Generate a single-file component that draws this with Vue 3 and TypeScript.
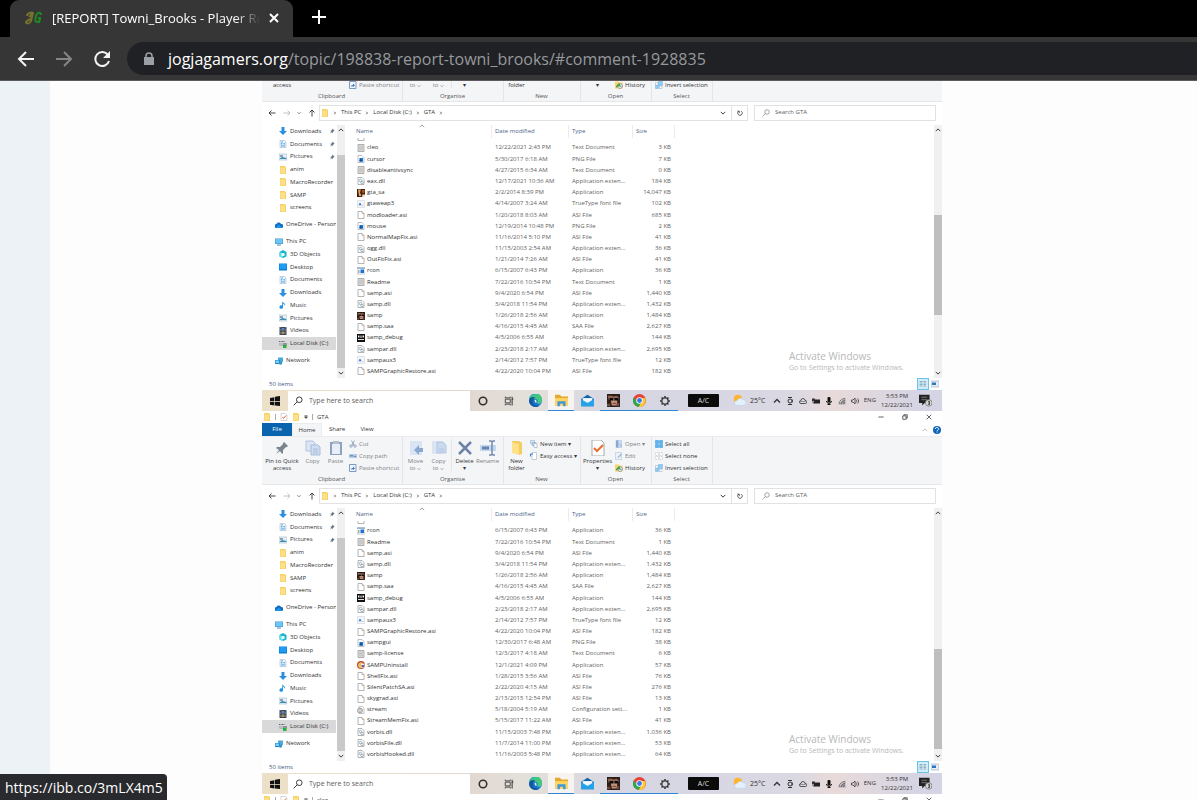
<script setup lang="ts">
interface FileRow {
  name: string
  icon: string
  date: string
  type: string
  size: string
}
interface NavItem {
  label: string
  icon: string
  root?: boolean
  pinned?: boolean
  selected?: boolean
  gapBefore?: boolean
}
interface Shot {
  id: string
  title?: string
  files: FileRow[]
  thumbTop: number
}

const file = (name: string, icon: string, date: string, type: string, size: string): FileRow => ({
  name, icon, date, type, size: size + ' KB',
})

const EXT = 'Application exten...'
const files: FileRow[] = [
  file('cleo.asi', 'blank', '10/22/2020 4:10 PM', 'ASI File', '327'),
  file('cleo', 'text', '12/22/2021 2:43 PM', 'Text Document', '3'),
  file('cursor', 'png', '5/30/2017 6:18 AM', 'PNG File', '7'),
  file('disableantivsync', 'text', '4/27/2015 6:34 AM', 'Text Document', '0'),
  file('eax.dll', 'dll', '12/17/2021 10:36 AM', EXT, '184'),
  file('gta_sa', 'gta', '2/2/2014 8:39 PM', 'Application', '14,047'),
  file('gtaweap3', 'font', '4/14/2007 3:24 AM', 'TrueType font file', '102'),
  file('modloader.asi', 'blank', '1/20/2018 8:03 AM', 'ASI File', '685'),
  file('mouse', 'png', '12/19/2014 10:48 PM', 'PNG File', '2'),
  file('NormalMapFix.asi', 'blank', '11/16/2014 5:10 PM', 'ASI File', '41'),
  file('ogg.dll', 'dll', '11/15/2003 2:54 AM', EXT, '36'),
  file('OutFitFix.asi', 'blank', '1/21/2014 7:26 AM', 'ASI File', '41'),
  file('rcon', 'app', '6/15/2007 6:43 PM', 'Application', '36'),
  file('Readme', 'text', '7/22/2016 10:54 PM', 'Text Document', '1'),
  file('samp.asi', 'blank', '9/4/2020 6:54 PM', 'ASI File', '1,440'),
  file('samp.dll', 'dll', '3/4/2018 11:54 PM', EXT, '1,432'),
  file('samp', 'samp', '1/26/2018 2:56 AM', 'Application', '1,484'),
  file('samp.saa', 'blank', '4/16/2015 4:45 AM', 'SAA File', '2,627'),
  file('samp_debug', 'debug', '4/5/2006 6:55 AM', 'Application', '144'),
  file('sampar.dll', 'dll', '2/23/2018 2:17 AM', EXT, '2,695'),
  file('sampaux3', 'font', '2/14/2012 7:57 PM', 'TrueType font file', '12'),
  file('SAMPGraphicRestore.asi', 'blank', '4/22/2020 10:04 PM', 'ASI File', '182'),
  file('sampgui', 'png', '12/30/2017 6:48 AM', 'PNG File', '38'),
  file('samp-license', 'text', '12/3/2017 4:18 AM', 'Text Document', '6'),
  file('SAMPUninstall', 'uninstall', '12/1/2021 4:09 PM', 'Application', '57'),
  file('ShellFix.asi', 'blank', '1/28/2015 3:56 AM', 'ASI File', '76'),
  file('SilentPatchSA.asi', 'blank', '2/22/2020 4:15 AM', 'ASI File', '276'),
  file('skygrad.asi', 'blank', '2/13/2015 12:54 PM', 'ASI File', '13'),
  file('stream', 'config', '5/18/2004 5:19 AM', 'Configuration sett...', '1'),
  file('StreamMemFix.asi', 'blank', '5/15/2017 11:22 AM', 'ASI File', '41'),
  file('vorbis.dll', 'dll', '11/15/2003 7:48 PM', EXT, '1,036'),
  file('vorbisFile.dll', 'dll', '11/7/2014 11:00 PM', EXT, '53'),
  file('vorbisHooked.dll', 'dll', '11/16/2003 5:48 PM', EXT, '64'),
]

/* The first window is scrolled past its title bar, the last shows only that. */
const shots: Shot[] = [
  { id: 'a', files: files.slice(0, 22), thumbTop: 93 },
  { id: 'b', title: 'GTA', files: files.slice(11, 33), thumbTop: 144 },
  { id: 'c', title: 'cleo', files: [], thumbTop: 0 },
]

const nav: NavItem[] = [
  { label: 'Downloads', icon: 'download', pinned: true },
  { label: 'Documents', icon: 'document', pinned: true },
  { label: 'Pictures', icon: 'picture', pinned: true },
  { label: 'anim', icon: 'folder' },
  { label: 'MacroRecorder', icon: 'folder' },
  { label: 'SAMP', icon: 'folder' },
  { label: 'screens', icon: 'folder' },
  { label: 'OneDrive - Personal', icon: 'onedrive', root: true, gapBefore: true },
  { label: 'This PC', icon: 'pc', root: true, gapBefore: true },
  { label: '3D Objects', icon: 'cube' },
  { label: 'Desktop', icon: 'desktop' },
  { label: 'Documents', icon: 'document' },
  { label: 'Downloads', icon: 'download' },
  { label: 'Music', icon: 'music' },
  { label: 'Pictures', icon: 'picture' },
  { label: 'Videos', icon: 'video' },
  { label: 'Local Disk (C:)', icon: 'disk', selected: true },
  { label: 'Network', icon: 'network', root: true, gapBefore: true },
]

const apps = [
  { name: 'Cortana', icon: 'ring' },
  { name: 'Task view', icon: 'taskview' },
  { name: 'Edge', icon: 'edge' },
  { name: 'File Explorer', icon: 'explorer', state: 'active' },
  { name: 'Mail', icon: 'mail' },
  { name: 'SAMP', icon: 'samp', state: 'open' },
  { name: 'Chrome', icon: 'chrome', state: 'open' },
  { name: 'Settings', icon: 'gear', state: 'open' },
]
const tray = ['up', 'camera', 'cloud', 'power', 'mic', 'wifi', 'sound']

/* Every glyph is drawn on a 16 x 16 canvas. */
const icons: Record<string, string> = {
  folder: '<path d="M2 0h9l3 2v14H2z" fill="#f7d062"/><path d="M3 3h9v12H3z" fill="#ffe08a"/>',
  bigfolder: '<path d="M3 1h7l3 2v11l-3 1V5L3 3z" fill="#f5cc62"/><path d="M3 2l7 2v11l-7-2z" fill="#ffe18a"/>',
  blank: '<path d="M2 1h8l4 4v10H2z" fill="#fff" stroke="#8d8d8d" stroke-width="1.300"/><path d="M10 1v4h4" fill="none" stroke="#8d8d8d"/>',
  text: '<path d="M2 1h12v14H2z" fill="#e2e2e2" stroke="#8d8d8d" stroke-width="1.300"/><path d="M4 4h8M4 6h8M4 8h8M4 10h8M4 12h8" stroke="#aaa"/>',
  dll: '<path d="M2 1h8l4 4v10H2z" fill="#fff" stroke="#8d8d8d" stroke-width="1.300"/><circle cx="7" cy="7" r="2.500" fill="none" stroke="#7d9db0" stroke-width="1.500"/><circle cx="10" cy="11" r="2.500" fill="none" stroke="#7d9db0" stroke-width="1.500"/>',
  config: '<path d="M4 1h7l3 3v11H4z" fill="#fff" stroke="#8d8d8d"/><circle cx="6" cy="9" r="5" fill="#ddd" stroke="#888" stroke-width="1.500"/><circle cx="6" cy="9" r="2" fill="#fff" stroke="#888"/>',
  png: '<path d="M2 1h8l4 4v10H2z" fill="#fff" stroke="#94a0ae" stroke-width="1.300"/><path d="M5 6h7v7H5z" fill="#1a74d1"/><path d="M5 10l2-2 5 5H5z" fill="#0c4d94"/>',
  font: '<path d="M1 1h14v14H1z" fill="#f3f6fa" stroke="#c5cdd6"/><path d="M4 11l2-5 2 5M5 9h3" stroke="#2866c9" stroke-width="1.500" fill="none"/><path d="M11 11h2" stroke="#888"/>',
  app: '<path d="M0 1h16v13H0z" fill="#fff" stroke="#8797a8"/><path d="M0 1h16v3H0z" fill="#9db4cc"/><path d="M2 6h3v6H2z" fill="#aaa"/><path d="M7 5h7v7H7z" fill="#1673d6"/>',
  gta: '<path d="M0 0h16v16H0z" fill="#3b1f14"/><path d="M2 1h6l-2 6 3 7H4z" fill="#e6a25a"/><path d="M10 2h5v5l-4 2z" fill="#bb5b27"/><path d="M11 11h5v5h-6z" fill="#f1e3cc"/>',
  samp: '<path d="M0 0h16v16H0z" fill="#2d1d17"/><path d="M1 2h5l2 1 4-1 3 3-1 2H2z" fill="#8d6552"/><path d="M4 5h9l-1 9H6z" fill="#c48f78"/><path d="M3 5h5v3H3zM9 5h5v3H9z" fill="#0d0b0b"/><path d="M7 11h4v1H7z" fill="#5a3328"/><path d="M0 12h4v3H0zM12 11h3v4h-3z" fill="#6b4d40"/>',
  debug: '<path d="M0 0h16v16H0z" fill="#111"/><path d="M2 3h3v4H2zM7 3h2v5H7zM11 3h3v4h-3z" fill="#eee"/><path d="M2 11h12" stroke="#ddd" stroke-width="2"/>',
  uninstall: '<circle cx="8" cy="8" r="8" fill="#b6452f"/><path d="M2 8a6 6 0 0 1 10-4L8 8l4 5A6 6 0 0 1 2 8z" fill="#f0bd54"/><path d="M8 5h7v8H8z" fill="#e9e9f6"/><path d="M9 8h5v4H9z" fill="#5468ac"/>',
  download: '<path d="M5 0h6v8h5l-8 8-8-8h5z" fill="#2e8fe0"/>',
  document: '<path d="M2 1h9l3 3v11H2z" fill="#eef5fb" stroke="#8aa7bd"/><path d="M4 4h4M4 7h3M9 7h3M4 10h3M9 10h3M4 12h8" stroke="#3f9ad8" stroke-width="1.500"/>',
  picture: '<path d="M0 2h16v12H0z" fill="#e5f2fc" stroke="#93a5b3"/><path d="M2 5h6v2H2z" fill="#39506a"/><path d="M2 10l5-2 8 2v2H2z" fill="#3c91b5"/>',
  onedrive: '<path d="M4 14a4 4 0 0 1-1-8 5 5 0 0 1 9 0 4 4 0 0 1 1 8z" fill="#0f6cc4"/><path d="M2 11l6-4 6 6-2 1H4z" fill="#1c95e6"/>',
  pc: '<path d="M0 1h16v11H0z" fill="#4b94c4"/><path d="M1 2h14v9H1z" fill="#69c6f7"/><path d="M4 14h8" stroke="#4f87b0" stroke-width="2"/>',
  cube: '<path d="M1 4l7-4 7 4v9l-7 3-7-3z" fill="#18b4cb"/><path d="M1 4l7 3v9l-7-3z" fill="#5de0ea"/><path d="M5 6h6v6H5z" fill="#e8fbff"/>',
  desktop: '<path d="M0 1h16v14H0z" fill="#0f7fd6"/><path d="M1 2h14v10H1z" fill="#1c9df2"/>',
  music: '<path d="M7 0c0 4 7 4 5 10 0-3-3-4-4-5v7a3.500 3.500 0 1 1-2-3z" fill="#1d93e6"/>',
  video: '<path d="M1 0h14v16H1z" fill="#3d4550"/><path d="M5 2h6v5H5z" fill="#5c89c4"/><path d="M5 9h6v5H5z" fill="#a88f63"/><path d="M3 1v15M13 1v15" stroke="#e6e6e6" stroke-dasharray="1 2"/>',
  disk: '<path d="M0 3h11" stroke="#567" stroke-width="2" stroke-dasharray="2 1"/><path d="M1 6h15v5H1z" fill="#8f9499"/><path d="M2 8h6" stroke="#e4e7ea" stroke-width="2"/><path d="M8 10h7v6H8z" fill="#25b33b"/>',
  network: '<path d="M6 1h10v9H6z" fill="#4aa9dd"/><path d="M0 6h10v8H0z" fill="#2586c2"/><path d="M1 7h7v5H1z" fill="#7bd0f5"/><circle cx="11" cy="12" r="3.500" fill="#3595cf"/>',
  pin: '<path d="M9 1l6 6-2 1-3 3v3l-3-3-5 4 4-5-3-3h3l3-3z" fill="#5f7488"/>',
  bigpin: '<path d="M10 2l4 4-1 1h-1l-3 3v3l-1 1-2-3-4 3 3-4-3-2 1-1h3l3-3V3z" fill="#7b838c"/>',
  copy: '<path d="M1 1h7l2 2v8H1z" fill="#dbe5f3" stroke="#b4c6df"/><path d="M6 5h7l2 2v8H6z" fill="#cfdef1" stroke="#a5bbda"/><path d="M8 9h5M8 11h5M8 13h5" stroke="#a9bfdc"/>',
  paste: '<path d="M2 2h12v13H2z" fill="#8ea2c0"/><path d="M4 4h8v10H4z" fill="#e8eef7"/><path d="M5 1h6v3H5z" fill="#b5c0d1"/>',
  cut: '<path d="M5 1l5 10M11 1L6 11" stroke="#8494ac" fill="none" stroke-width="1.500"/><circle cx="4" cy="12" r="2.500" fill="none" stroke="#7b93ba" stroke-width="1.500"/><circle cx="12" cy="12" r="2.500" fill="none" stroke="#7b93ba" stroke-width="1.500"/>',
  copypath: '<path d="M0 4h16v8H0z" fill="#b5cae6"/><path d="M2 9l2-3 2 3 2-3M10 9h4" stroke="#4e75ab" stroke-width="1.500" fill="none"/>',
  shortcut: '<path d="M1 1h13v14H1z" fill="#f0f5fc" stroke="#7d9ac2" stroke-width="2"/><path d="M5 12V8h3V5l4 4-4 3v-2" fill="#4679be"/>',
  moveto: '<path d="M2 1h12v14H2z" fill="#d9e5f4"/><path d="M15 8v4h-4v3l-5-5 5-5v3z" fill="#8ca8cf"/>',
  copyto: '<path d="M1 1h9v13H1z" fill="#dce6f3"/><path d="M6 2h6l3 3v8H6z" fill="#c9daef" stroke="#b2c6e1"/><path d="M8 9h5M8 11h5" stroke="#b2c6e1"/>',
  delete: '<path d="M2 2l12 12M14 2L2 14" stroke="#6d82a7" stroke-width="2.500"/>',
  rename: '<path d="M0 5h16v6H0z" fill="#c6d6ec"/><path d="M2 8h7" stroke="#6584b3" stroke-width="3"/><path d="M9 1h2l1 1 1-1h2M12 2v12M9 15h2l1-1 1 1h2" stroke="#7288ac" fill="none" stroke-width="1.500"/>',
  newitem: '<path d="M1 1h8v6H1z" fill="#dceaf7" stroke="#87a4c2"/><path d="M4 5h7v6H4z" fill="#b9d6f2" stroke="#7e9cba"/><path d="M8 7h6v8H8z" fill="#fff" stroke="#8595a8"/>',
  easy: '<path d="M4 1h9v14H4z" fill="#fff" stroke="#9aa4b0"/><path d="M1 9V4h5" fill="none" stroke="#2f7ed0" stroke-width="2"/>',
  properties: '<path d="M2 0h9l3 3v13H2z" fill="#fff" stroke="#a9a9a9"/><path d="M4 8l3 3 6-6" fill="none" stroke="#ef6b29" stroke-width="2"/>',
  open: '<path d="M2 1h11v14H2z" fill="#d8e5f5" stroke="#9fb9d9"/><path d="M2 1h5v14H2z" fill="#86a8d1"/><path d="M10 5v7h4" stroke="#6e91bd" fill="none"/>',
  edit: '<path d="M1 1h12v14H1z" fill="#ecf2f9" stroke="#a5bad4"/><path d="M5 12l1-3 6-6 2 2-6 6z" fill="#9db9da"/>',
  history: '<path d="M0 1h7l2 2h6v12H0z" fill="#f7d66d"/><circle cx="10" cy="10" r="5" fill="#e8f2e5" stroke="#888" stroke-width="1.500"/><path d="M2 14c0-5 2-7 5-7V4l4 4-4 4v-2c-2 0-3 2-5 4z" fill="#30a23b"/><path d="M10 8v3h3" stroke="#555" fill="none"/>',
  selectall: '<path d="M1 1h6v6H1zM9 1h6v6H9zM1 9h6v6H1zM9 9h6v6H9z" fill="#58b7f2" stroke="#2c92d6"/>',
  selectnone: '<path d="M1 1h6v6H1zM9 1h6v6H9zM1 9h6v6H1zM9 9h6v6H9z" fill="#fff" stroke="#a9b1ba" stroke-dasharray="2 1"/>',
  invert: '<path d="M7 1h8v8H7zM1 9h6v6H1z" fill="#8fccf5" stroke="#64aee0"/><path d="M1 3h5v5H1zM9 10h5v5H9z" fill="#fff" stroke="#89a8c2"/>',
  back: '<path d="M15 8H2M7 3L2 8l5 5" fill="none" stroke="currentColor" stroke-width="1.800"/>',
  fwd: '<path d="M1 8h13M9 3l5 5-5 5" fill="none" stroke="currentColor" stroke-width="1.800"/>',
  upward: '<path d="M8 15V2M3 7l5-5 5 5" fill="none" stroke="currentColor" stroke-width="1.800"/>',
  right: '<path d="M5 3l5 5-5 5" fill="none" stroke="currentColor" stroke-width="3"/>',
  down: '<path d="M2 5l6 6 6-6" fill="none" stroke="currentColor" stroke-width="2.500"/>',
  up: '<path d="M2 11l6-6 6 6" fill="none" stroke="currentColor" stroke-width="2.500"/>',
  caret: '<path d="M2 2h12M2 7h12l-6 7z" fill="currentColor" stroke="currentColor" stroke-width="2"/>',
  refresh: '<path d="M5 3a6 6 0 1 0 6 0M6 8V3H1" fill="none" stroke="currentColor" stroke-width="2"/>',
  search: '<circle cx="10" cy="6" r="4.500" fill="none" stroke="currentColor" stroke-width="1.500"/><path d="M7 9l-6 6" stroke="currentColor" stroke-width="1.500"/>',
  minimise: '<path d="M1 8h14" stroke="currentColor" stroke-width="2"/>',
  restore: '<path d="M2 5h9v9H2zM5 5V2h9v9h-3" fill="none" stroke="currentColor" stroke-width="2"/>',
  close: '<path d="M2 2l12 12M14 2L2 14" fill="none" stroke="currentColor" stroke-width="2"/>',
  help: '<circle cx="8" cy="8" r="8" fill="#0f66bd"/><path d="M5 6a3 3 0 1 1 4 2.500L8 10M8 11v2" fill="none" stroke="#fff" stroke-width="1.800"/>',
  checkdoc: '<path d="M2 1h9l3 3v11H2z" fill="#fff" stroke="#aaa"/><path d="M5 8l2 3 5-6" fill="none" stroke="#e4672d" stroke-width="2"/>',
  windows: '<path d="M0 3l7-1v6H0zM8 1l8-1v8H8zM0 9h7v6l-7-1zM8 9h8v7l-8-1z" fill="#111"/>',
  ring: '<circle cx="8" cy="8" r="6" fill="none" stroke="#303030" stroke-width="2.500"/>',
  taskview: '<path d="M2 5h8v6H2zM2 1v2h8V1M2 15v-2h8v2" fill="none" stroke="#444" stroke-width="1.500"/><path d="M13 1v14M12 5h3" stroke="#444" stroke-width="1.800"/>',
  edge: '<circle cx="8" cy="8" r="8" fill="#1478c9"/><path d="M0 6a8 8 0 0 1 16 2c0 3-3 4-6 3 2-3-1-6-4-5S1 8 0 6z" fill="#42c77f"/><path d="M0 8c1-5 6-5 8-3-3 0-4 3-3 6s5 4 8 3A8 8 0 0 1 0 8z" fill="#1557a3"/><path d="M0 6a8 8 0 0 1 9-6C5 1 2 3 0 6z" fill="#2aa9d8"/><path d="M8 7c2 1 1 3 1 4 2 1 5 0 6-1-2 3-8 2-8-2 0-1 0-1 1-1z" fill="#eaf7fb"/>',
  explorer: '<path d="M0 1h6l2 2h8v11H0z" fill="#e6a92f"/><path d="M0 5h16v9H0z" fill="#ffd460"/><path d="M3 9h10v6h-3v-3H6v3H3z" fill="#3d99d9"/>',
  mail: '<path d="M0 6l8-5 8 5v9H0z" fill="#0e63ad"/><path d="M2 5h12v6H2z" fill="#f2f8fd"/><path d="M0 6l8 5 8-5v9H0z" fill="#24a2ea"/>',
  chrome: '<circle cx="8" cy="8" r="8" fill="#e64335"/><path d="M1 4a8 8 0 0 0 6 12l4-7-6 1z" fill="#31a650"/><path d="M15 5a8 8 0 0 1-8 11l4-7-3-4z" fill="#fcc934"/><circle cx="8" cy="8" r="4" fill="#fff"/><circle cx="8" cy="8" r="3" fill="#3979e3"/>',
  gear: '<circle cx="8" cy="8" r="5" fill="none" stroke="#3a3a3a" stroke-width="2"/><path d="M8 0v3M8 13v3M0 8h3M13 8h3M2.500 2.500l2 2M11.500 11.500l2 2M13.500 2.500l-2 2M2.500 13.500l2-2" stroke="#3a3a3a" stroke-width="2.500"/>',
  weather: '<circle cx="6" cy="6" r="5" fill="#ffb52e"/><path d="M5 14a3 3 0 0 1 0-6 4 4 0 0 1 7-1 3.500 3.500 0 0 1 1 7z" fill="#e4f0fb" stroke="#a9c8e6" stroke-width=".5"/>',
  camera: '<path d="M4 1h8M4 15h8" stroke="#333" stroke-width="2"/><circle cx="8" cy="8" r="4" fill="none" stroke="#333" stroke-width="2"/><path d="M13 5v6" stroke="#333" stroke-width="1.500"/>',
  cloud: '<path d="M4 13a3 3 0 0 1 0-6 4 4 0 0 1 8 0 3 3 0 0 1 1 6z" fill="none" stroke="#444" stroke-width="1.800"/><path d="M3 9h10" stroke="#444"/>',
  power: '<path d="M4 5h12v8H4z" fill="#222"/><path d="M0 3h6v5H0z" fill="#333"/><path d="M2 8v4h3" fill="none" stroke="#333" stroke-width="1.500"/>',
  mic: '<rect x="5" y="0" width="6" height="11" rx="2" fill="#111"/><path d="M3 8c0 6 10 6 10 0M8 12v4M5 15h6" fill="none" stroke="#111" stroke-width="2"/>',
  wifi: '<path d="M1 15L15 1v14z" fill="#a9a5ab"/><path d="M2 14A12 12 0 0 1 14 3M6 14a8 8 0 0 1 8-7M10 14a4 4 0 0 1 4-3" fill="none" stroke="#444" stroke-width="1.300"/>',
  sound: '<path d="M1 6h3l4-4v12l-4-4H1z" fill="none" stroke="#333" stroke-width="1.500"/><path d="M10 5c2 2 2 4 0 6M13 3c3 3 3 7 0 10" fill="none" stroke="#333" stroke-width="1.500"/>',
  notify: '<path d="M0 1h13v10H7l-3 3v-3H0z" fill="#222"/><path d="M3 4h7M3 7h7" stroke="#888"/><circle cx="12" cy="11" r="4" fill="#ddd" stroke="#777"/><path d="M11 9h2v4h-2M11 11h2" stroke="#333" fill="none"/>',
  details: '<path d="M0 0h16v16H0z" fill="#d3eefb"/><path d="M1 3h6M1 6h6M1 9h6M1 12h6M9 3h5M9 6h5M9 9h5M9 12h5" stroke="#7c97a8" stroke-width="1.500"/>',
  thumbs: '<path d="M0 2h16v12H0z" fill="#e6eef6" stroke="#8a97a4"/><path d="M2 5h8v5H2z" fill="#2b77bd"/>',
}
</script>

<template>
  <div class="browser">
    <header class="chrome">
      <div class="tabstrip">
        <div class="tab">
          <svg class="favicon" viewBox="0 0 18 14" aria-hidden="true">
            <path d="M2 5c0-3 5-4 6-3L6 10c-1 3-5 3-5 1 0-1 2-2 5-3M4 6l4-4" fill="none" stroke="#75722c" stroke-width="2" />
            <path d="M16 4c0-3-4-3-5 1s-1 6 1 6 3-1 3-4h-2M15 7l-1 5" fill="none" stroke="#1d8a24" stroke-width="2" />
          </svg>
          <span class="tab-title">[REPORT] Towni_Brooks - Player Report</span>
          <button class="plain" aria-label="Close tab">
            <svg class="tab-close" viewBox="0 0 10 10"><path d="M1 1l8 8M9 1L1 9" stroke="#fff" stroke-width="2" /></svg>
          </button>
        </div>
        <button class="plain new-tab" aria-label="New tab">
          <svg viewBox="0 0 14 14"><path d="M7 0v14M0 7h14" stroke="#fff" stroke-width="2" /></svg>
        </button>
      </div>
      <div class="toolbar">
        <button class="plain" aria-label="Back">
          <svg class="nav-icon" viewBox="0 0 18 18"><path d="M17 9H3M9 2L2 9l7 7" fill="none" stroke="#f4f4f4" stroke-width="2" /></svg>
        </button>
        <button class="plain" aria-label="Forward">
          <svg class="nav-icon" viewBox="0 0 18 18"><path d="M1 9h14M9 2l7 7-7 7" fill="none" stroke="#858585" stroke-width="2" /></svg>
        </button>
        <button class="plain" aria-label="Reload">
          <svg class="nav-icon" viewBox="0 0 18 18">
            <path d="M15 5a7 7 0 1 0 1 6" fill="none" stroke="#f4f4f4" stroke-width="2" /><path d="M17 1v7h-7z" fill="#f4f4f4" />
          </svg>
        </button>
        <div class="omnibox">
          <svg class="lock" viewBox="0 0 10 14" aria-hidden="true">
            <path d="M0 5h10v8H0z" fill="#9aa0a6" /><path d="M2 6V4a3 3 0 0 1 6 0v2" fill="none" stroke="#9aa0a6" stroke-width="1.5" />
          </svg>
          <a class="url" href="#comment-1928835"><b>jogjagamers.org</b>/topic/198838-report-towni_brooks/#comment-1928835</a>
        </div>
      </div>
    </header>

    <main class="page">
      <article class="post">
        <section v-for="shot in shots" :key="shot.id" class="shot">
          <div v-if="shot.title" class="titlebar">
            <svg class="ic" viewBox="0 0 16 16" v-html="icons.folder" />
            <i class="bar" />
            <svg class="ic" viewBox="0 0 16 16" v-html="icons.checkdoc" />
            <svg class="ic" viewBox="0 0 16 16" v-html="icons.folder" />
            <svg class="ic tiny" viewBox="0 0 16 16" v-html="icons.caret" />
            <i class="bar" />
            <span class="title">{{ shot.title }}</span>
            <div class="window-buttons">
              <button class="plain" aria-label="Minimise"><svg class="ic small" viewBox="0 0 16 16" v-html="icons.minimise" /></button>
              <button class="plain" aria-label="Restore"><svg class="ic small" viewBox="0 0 16 16" v-html="icons.restore" /></button>
              <button class="plain" aria-label="Close"><svg class="ic small" viewBox="0 0 16 16" v-html="icons.close" /></button>
            </div>
          </div>

          <template v-if="shot.files.length">
            <div v-if="shot.title" class="ribbon-tabs">
              <button class="plain file-tab">File</button>
              <button class="plain home-tab">Home</button>
              <button class="plain">Share</button>
              <button class="plain">View</button>
              <span class="ribbon-help">
                <svg class="ic small faint" viewBox="0 0 16 16" v-html="icons.up" />
                <svg class="ic" viewBox="0 0 16 16" v-html="icons.help" />
              </span>
            </div>

            <div class="ribbon">
              <div class="group clipboard">
                <div class="tools">
                  <button class="plain big dark wide"><svg viewBox="0 0 16 16" v-html="icons.bigpin" />Pin to Quick<br>access</button>
                  <button class="plain big"><svg viewBox="0 0 16 16" v-html="icons.copy" />Copy</button>
                  <button class="plain big"><svg viewBox="0 0 16 16" v-html="icons.paste" />Paste</button>
                  <div class="stack">
                    <button class="plain"><svg class="ic" viewBox="0 0 16 16" v-html="icons.cut" />Cut</button>
                    <button class="plain"><svg class="ic" viewBox="0 0 16 16" v-html="icons.copypath" />Copy path</button>
                    <button class="plain"><svg class="ic" viewBox="0 0 16 16" v-html="icons.shortcut" />Paste shortcut</button>
                  </div>
                </div>
                <span class="group-name">Clipboard</span>
              </div>
              <div class="group organise">
                <div class="tools">
                  <button class="plain big"><svg viewBox="0 0 16 16" v-html="icons.moveto" />Move<br><span class="drop-line">to <svg class="ic tiny" viewBox="0 0 16 16" v-html="icons.down" /></span></button>
                  <button class="plain big"><svg viewBox="0 0 16 16" v-html="icons.copyto" />Copy<br><span class="drop-line">to <svg class="ic tiny" viewBox="0 0 16 16" v-html="icons.down" /></span></button>
                  <i class="split" />
                  <button class="plain big dark"><svg viewBox="0 0 16 16" v-html="icons.delete" />Delete<br>▾</button>
                  <button class="plain big"><svg viewBox="0 0 16 16" v-html="icons.rename" />Rename</button>
                </div>
                <span class="group-name">Organise</span>
              </div>
              <div class="group new">
                <div class="tools">
                  <button class="plain big dark"><svg viewBox="0 0 16 16" v-html="icons.bigfolder" />New<br>folder</button>
                  <div class="stack dark">
                    <button class="plain"><svg class="ic" viewBox="0 0 16 16" v-html="icons.newitem" />New item ▾</button>
                    <button class="plain"><svg class="ic" viewBox="0 0 16 16" v-html="icons.easy" />Easy access ▾</button>
                  </div>
                </div>
                <span class="group-name">New</span>
              </div>
              <div class="group opening">
                <div class="tools">
                  <button class="plain big dark"><svg viewBox="0 0 16 16" v-html="icons.properties" />Properties<br>▾</button>
                  <div class="stack">
                    <button class="plain"><svg class="ic" viewBox="0 0 16 16" v-html="icons.open" />Open ▾</button>
                    <button class="plain"><svg class="ic" viewBox="0 0 16 16" v-html="icons.edit" />Edit</button>
                    <button class="plain dark"><svg class="ic" viewBox="0 0 16 16" v-html="icons.history" />History</button>
                  </div>
                </div>
                <span class="group-name">Open</span>
              </div>
              <div class="group selecting">
                <div class="tools">
                  <div class="stack dark">
                    <button class="plain"><svg class="ic" viewBox="0 0 16 16" v-html="icons.selectall" />Select all</button>
                    <button class="plain"><svg class="ic" viewBox="0 0 16 16" v-html="icons.selectnone" />Select none</button>
                    <button class="plain"><svg class="ic" viewBox="0 0 16 16" v-html="icons.invert" />Invert selection</button>
                  </div>
                </div>
                <span class="group-name">Select</span>
              </div>
            </div>

            <div class="address">
              <div class="history">
                <button class="plain" aria-label="Back"><svg class="ic" viewBox="0 0 16 16" v-html="icons.back" /></button>
                <button class="plain faint" aria-label="Forward"><svg class="ic" viewBox="0 0 16 16" v-html="icons.fwd" /></button>
                <button class="plain" aria-label="Recent"><svg class="ic tiny" viewBox="0 0 16 16" v-html="icons.down" /></button>
                <button class="plain" aria-label="Up"><svg class="ic" viewBox="0 0 16 16" v-html="icons.upward" /></button>
              </div>
              <div class="path">
                <svg class="ic" viewBox="0 0 16 16" v-html="icons.folder" />
                <svg class="ic tiny" viewBox="0 0 16 16" v-html="icons.right" />
                <span>This PC</span>
                <svg class="ic tiny" viewBox="0 0 16 16" v-html="icons.right" />
                <span>Local Disk (C:)</span>
                <svg class="ic tiny" viewBox="0 0 16 16" v-html="icons.right" />
                <span>GTA</span>
                <svg class="ic tiny" viewBox="0 0 16 16" v-html="icons.right" />
                <svg class="ic small drop" viewBox="0 0 16 16" v-html="icons.down" />
                <button class="plain reload" aria-label="Refresh"><svg class="ic small" viewBox="0 0 16 16" v-html="icons.refresh" /></button>
              </div>
              <label class="find">
                <svg class="ic" viewBox="0 0 16 16" v-html="icons.search" />
                <input type="text" placeholder="Search GTA" aria-label="Search GTA">
              </label>
            </div>

            <div class="body">
              <nav class="tree">
                <ul>
                  <template v-for="(item, i) in nav" :key="i">
                    <li v-if="item.gapBefore" class="gap" aria-hidden="true" />
                    <li :class="{ root: item.root, selected: item.selected }">
                      <svg class="ic" viewBox="0 0 16 16" v-html="icons[item.icon]" />
                      <span>{{ item.label }}</span>
                      <svg v-if="item.pinned" class="ic small pinned" viewBox="0 0 16 16" v-html="icons.pin" />
                    </li>
                  </template>
                </ul>
              </nav>
              <div class="scroll tree-scroll">
                <svg class="ic small" viewBox="0 0 16 16" v-html="icons.up" />
                <div class="track"><div class="thumb" /></div>
                <svg class="ic small" viewBox="0 0 16 16" v-html="icons.down" />
              </div>
              <div class="files">
                <table>
                  <thead>
                    <tr>
                      <th>Name<svg class="ic small sort" viewBox="0 0 16 16" v-html="icons.up" /></th>
                      <th>Date modified</th>
                      <th>Type</th>
                      <th>Size</th>
                    </tr>
                  </thead>
                  <tbody>
                    <tr v-for="row in shot.files" :key="row.name + row.type">
                      <td class="name"><svg class="ic" viewBox="0 0 16 16" v-html="icons[row.icon]" />{{ row.name }}</td>
                      <td>{{ row.date }}</td>
                      <td>{{ row.type }}</td>
                      <td class="size">{{ row.size }}</td>
                    </tr>
                  </tbody>
                </table>
                <div class="watermark">
                  <strong>Activate Windows</strong>
                  <span>Go to Settings to activate Windows.</span>
                </div>
              </div>
              <div class="scroll">
                <svg class="ic small" viewBox="0 0 16 16" v-html="icons.up" />
                <div class="track" :style="{ paddingTop: shot.thumbTop - 11 + 'px' }"><div class="thumb short" /></div>
                <svg class="ic small" viewBox="0 0 16 16" v-html="icons.down" />
              </div>
            </div>

            <div class="status">
              <span>50 items</span>
              <button class="plain view on" aria-label="Details"><svg class="ic" viewBox="0 0 16 16" v-html="icons.details" /></button>
              <button class="plain view" aria-label="Large icons"><svg class="ic" viewBox="0 0 16 16" v-html="icons.thumbs" /></button>
            </div>

            <div class="taskbar">
              <button class="plain start" aria-label="Start"><svg class="app" viewBox="0 0 16 16" v-html="icons.windows" /></button>
              <label class="cortana">
                <svg class="app" viewBox="0 0 16 16" v-html="icons.search" />
                <input type="text" placeholder="Type here to search" aria-label="Type here to search">
              </label>
              <div class="apps">
                <button v-for="app in apps" :key="app.name" class="plain" :class="app.state" :aria-label="app.name">
                  <svg :class="['app', { large: app.icon !== 'ring' && app.icon !== 'taskview' && app.icon !== 'gear' }]" viewBox="0 0 16 16" v-html="icons[app.icon]" />
                </button>
              </div>
              <span class="battery">A/C</span>
              <span class="weather"><svg class="app large" viewBox="0 0 16 16" v-html="icons.weather" />25°C</span>
              <span class="tray"><svg v-for="t in tray" :key="t" class="ic" viewBox="0 0 16 16" v-html="icons[t]" /></span>
              <span class="lang">ENG</span>
              <span class="clock">3:53 PM<br>12/22/2021</span>
              <svg class="app notify" viewBox="0 0 16 16" v-html="icons.notify" />
            </div>
          </template>
        </section>
      </article>
    </main>
    <div class="link-hint">https://ibb.co/3mLX4m5</div>
  </div>
</template>

<style>
body {
  margin: 0;
  overflow: hidden;
}
</style>

<style scoped>
* {
  box-sizing: border-box;
}
.browser {
  display: flex;
  flex-direction: column;
  height: 100vh;
  font-family: "Open Sans", "Noto Sans", sans-serif;
  background: #edf2f7;
}
.plain {
  display: flex;
  align-items: center;
  justify-content: center;
  margin: 0;
  padding: 0;
  border: 0;
  background: none;
  font: inherit;
  color: inherit;
}
svg {
  display: block;
  flex: none;
}

/* Browser frame */
.chrome {
  position: relative;
  z-index: 1;
  flex: none;
  background: #000;
  border-bottom: 1px solid #5c5a5d;
}
.tabstrip {
  display: flex;
  height: 37px;
  padding-left: 10px;
}
.tab {
  display: flex;
  align-items: center;
  gap: 9px;
  width: 283px;
  padding: 0 14px 2px 15px;
  border-radius: 9px 9px 0 0;
  background: #363636;
  color: #fff;
}
.favicon {
  width: 18px;
  height: 14px;
}
.tab-title {
  flex: 1;
  overflow: hidden;
  white-space: nowrap;
  font-size: 13px;
  line-height: 20px;
  mask-image: linear-gradient(90deg, #000 88%, transparent);
}
.tab-close {
  width: 10px;
  height: 10px;
}
.new-tab {
  width: 52px;
  padding-bottom: 4px;
}
.new-tab svg {
  width: 14px;
  height: 14px;
}
.toolbar {
  display: flex;
  align-items: center;
  gap: 20px;
  height: 43px;
  padding: 0 0 0 17px;
  background: #363636;
}
.nav-icon {
  width: 18px;
  height: 18px;
}
.omnibox {
  display: flex;
  flex: 1;
  align-items: center;
  gap: 14px;
  height: 33px;
  margin-left: -4px;
  padding-left: 17px;
  border-radius: 17px 0 0 17px;
  background: #202124;
}
.lock {
  width: 10px;
  height: 14px;
}
.url {
  color: #96999d;
  font-size: 16px;
  line-height: 24px;
  text-decoration: none;
  white-space: nowrap;
}
.url b {
  color: #fff;
  font-weight: 400;
}
.link-hint {
  position: fixed;
  left: 0;
  bottom: 0;
  z-index: 2;
  padding: 4px 4px 2px 5px;
  border-radius: 0 4px 0 0;
  background: #292a2d;
  color: #fff;
  font-size: 14px;
  line-height: 20px;
}

/* Forum page */
.page {
  flex: 1;
  min-height: 0;
  overflow: hidden;
  padding-left: 50px;
}
.post {
  margin-top: -28px;
  padding-left: 212px;
  background: #fdfdfd;
}

/* Explorer window */
.shot {
  display: flex;
  flex-direction: column;
  width: 680px;
  background: #fff;
  color: #333;
  font-size: 6px;
  font-weight: 500;
  line-height: 7px;
}
.ic {
  width: 8px;
  height: 8px;
}
.ic.small {
  width: 6px;
  height: 6px;
}
.ic.tiny {
  width: 4px;
  height: 4px;
}
.faint {
  color: #bbb;
}
.titlebar {
  display: flex;
  align-items: center;
  gap: 4px;
  height: 12px;
  padding: 0 10px 0 1px;
}
.bar {
  width: 1px;
  height: 6px;
  background: #aaa;
}
.window-buttons {
  display: flex;
  gap: 18px;
  margin-left: auto;
}
.ribbon-tabs {
  display: flex;
  height: 13px;
}
.ribbon-tabs .plain {
  width: 30px;
}
.ribbon-tabs .file-tab {
  background: #0a64ad;
  color: #fff;
}
.ribbon-tabs .home-tab {
  border: 1px solid #ececee;
  border-bottom: 0;
  background: #f4f5f7;
}
.ribbon-help {
  display: flex;
  align-items: center;
  gap: 5px;
  margin-left: auto;
  padding-right: 1px;
}
.ribbon {
  display: flex;
  height: 49px;
  border-top: 1px solid #ececee;
  border-bottom: 1px solid #e6e6e8;
  background: #f4f5f7;
  color: #808285;
}
.dark {
  color: #333;
}
.group {
  display: flex;
  flex-direction: column;
  justify-content: space-between;
  padding: 2px 2px 1px 1px;
  border-right: 1px solid #e4e5e8;
}
.clipboard {
  width: 141px;
}
.organise {
  width: 101px;
}
.new {
  width: 77px;
}
.opening {
  width: 71px;
}
.selecting {
  width: 61px;
}
.tools {
  display: flex;
}
.group-name {
  text-align: center;
  color: #555;
}
.big {
  flex-direction: column;
  justify-content: flex-start;
  width: 23px;
  padding-top: 1px;
  white-space: nowrap;
  line-height: 7px;
}
.big > svg {
  width: 16px;
  height: 16px;
  margin-bottom: 2px;
}
.drop-line {
  display: flex;
  align-items: center;
  gap: 2px;
}
.big.wide {
  width: 38px;
}
.opening .big {
  width: 31px;
}
.split {
  width: 1px;
  height: 32px;
  margin: 0 1px;
  background: #e4e5e8;
}
.stack {
  display: flex;
  flex-direction: column;
  gap: 4px;
  padding: 1px 0 0 2px;
  white-space: nowrap;
}
.stack .plain {
  justify-content: flex-start;
  gap: 2px;
}
.address {
  display: flex;
  align-items: center;
  height: 23px;
  padding: 0 6px 2px;
}
.history {
  display: flex;
  justify-content: space-between;
  width: 48px;
  margin-right: 3px;
}
.path {
  display: flex;
  flex: 1;
  align-items: center;
  gap: 4px;
  height: 16px;
  padding-left: 1px;
  border: 1px solid #e2e2e2;
}
.drop {
  margin: 0 1px 0 auto;
}
.reload {
  align-self: stretch;
  width: 16px;
  border-left: 1px solid #e2e2e2;
}
.find {
  display: flex;
  align-items: center;
  gap: 5px;
  width: 182px;
  height: 16px;
  margin-left: 6px;
  padding-left: 7px;
  border: 1px solid #e2e2e2;
  color: #888;
}
input {
  flex: 1;
  min-width: 0;
  padding: 0;
  border: 0;
  outline: 0;
  background: none;
  font: inherit;
}
input::placeholder {
  color: #5c5c5c;
  opacity: 1;
}

/* Folder tree and file list */
.body {
  display: flex;
  height: 253px;
}
.tree {
  width: 74px;
  overflow: hidden;
}
.tree ul {
  display: flex;
  flex-direction: column;
  height: 242px;
  margin: 0;
  padding: 0;
  list-style: none;
}
.tree li {
  display: flex;
  flex: 3;
  align-items: center;
  gap: 3px;
  min-height: 0;
  padding-left: 17px;
  white-space: nowrap;
}
.tree li.gap {
  flex: 1;
}
.tree li.root {
  padding-left: 13px;
}
.tree li.selected {
  background: #d9d9d9;
}
.pinned {
  margin-left: auto;
  margin-right: 1px;
}
.scroll {
  display: flex;
  flex-direction: column;
  align-items: center;
  width: 8px;
  padding: 2px 0;
  background: #f0f0f0;
}
.tree-scroll {
  margin-left: 1px;
}
.track {
  flex: 1;
  align-self: stretch;
  padding-top: 1px;
}
.tree-scroll .track {
  padding-top: 22px;
}
.thumb {
  height: 213px;
  background: #c9c9c9;
}
.thumb.short {
  height: 100px;
  background: #bfbfbf;
}
.files {
  position: relative;
  flex: 1;
  padding-left: 11px;
}
table {
  display: flex;
  flex-direction: column;
  width: 320px;
  height: 253px;
  color: #626262;
}
tr {
  display: grid;
  grid-template-columns: 136px 77px 64px 42px;
}
th {
  position: relative;
  height: 13px;
  padding: 3px 0 0 3px;
  border-right: 1px solid #ececec;
  color: #4d6489;
  font-weight: 500;
  text-align: left;
}
th:first-child {
  padding-left: 0;
}
.sort {
  position: absolute;
  left: 63px;
  top: -2px;
  color: #999;
}
tbody {
  display: flex;
  flex: 1;
  flex-direction: column;
  justify-content: flex-end;
  min-height: 0;
  overflow: hidden;
  padding-bottom: 1px;
}
tbody tr {
  flex: none;
  align-items: center;
  height: calc(246px / 22);
}
td {
  padding: 0 0 0 3px;
  white-space: nowrap;
}
td.name {
  display: flex;
  align-items: center;
  gap: 2px;
  padding-left: 1px;
  color: #333;
}
td.size {
  padding: 0 4px 0 0;
  text-align: right;
}
.watermark {
  position: absolute;
  right: 22px;
  bottom: 5px;
  color: #b8b8b8;
  font-size: 7px;
  font-weight: 400;
  line-height: 10px;
  width: 123px;
  white-space: nowrap;
}
.watermark strong {
  display: block;
  font-size: 10px;
  font-weight: 400;
  line-height: 13px;
}
.status {
  display: flex;
  align-items: center;
  height: 12px;
  padding: 0 3px 0 7px;
  color: #3d5780;
}
.status .on {
  width: 12px;
  height: 12px;
  margin: 0 2px 0 auto;
  border: 1px solid #6cc3e8;
  background: #cdecfa;
}

/* Taskbar */
.taskbar {
  display: flex;
  align-items: center;
  height: 21px;
  background: linear-gradient(90deg, #ece0c8 0 26px, #e2d8d2 208px, #e4e0da 260px, #d6d6e3 360px, #d9d8e3 530px, #e8dad9 570px, #d5d4e4 660px);
  color: #333;
}
.start {
  width: 26px;
}
.app {
  width: 10px;
  height: 10px;
}
.app.large {
  width: 13px;
  height: 13px;
}
.cortana {
  display: flex;
  align-items: center;
  gap: 6px;
  width: 182px;
  height: 20px;
  padding-left: 5px;
  background: #fff;
  font-size: 7px;
}
.apps {
  display: flex;
  align-self: stretch;
}
.apps .plain {
  width: 26px;
  border-top: 1px solid transparent;
  border-bottom: 1px solid transparent;
}
.apps .active {
  background: #f7f3f0;
}
.apps .active,
.apps .open {
  border-bottom-color: #2f86d6;
}
.battery {
  width: 31px;
  height: 13px;
  margin-left: 10px;
  border-radius: 1px;
  background: #0b0b0b;
  color: #ddd;
  font-size: 7px;
  line-height: 13px;
  text-align: center;
}
.weather {
  display: flex;
  align-items: center;
  gap: 4px;
  margin-left: 14px;
  font-size: 7px;
}
.tray {
  display: flex;
  gap: 5px;
  margin-left: auto;
}
.lang {
  margin-left: 5px;
}
.clock {
  width: 36px;
  margin-left: 3px;
  text-align: center;
  line-height: 9px;
}
.notify {
  width: 13px;
  height: 13px;
  margin: 0 10px 0 4px;
}
</style>
